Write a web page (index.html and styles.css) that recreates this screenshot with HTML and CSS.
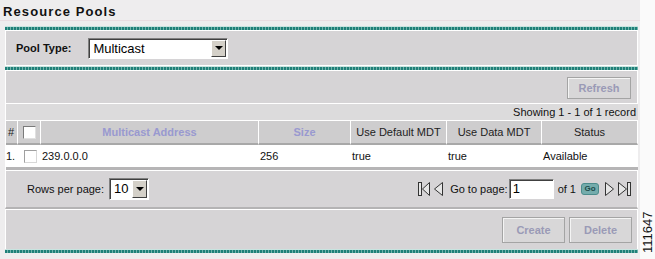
FILE: index.html
```html
<!DOCTYPE html>
<html lang="en">
<head>
  <meta charset="UTF-8">
  <title>Resource Pools</title>
  <link rel="stylesheet" href="styles.css">
</head>
<body>
  <div class="page">
    <div class="main">
      <h1 class="title">Resource Pools</h1>
      <div class="panel">
        <div class="stripe"></div>
        <div class="section filter">
          <span class="label">Pool Type:</span>
          <div class="select pool">
            <span class="value">Multicast</span>
            <span class="arrow"><i></i></span>
          </div>
        </div>
        <div class="stripe"></div>
        <div class="section toolbar">
          <button class="btn">Refresh</button>
        </div>
        <div class="showing">Showing 1 - 1 of 1 record</div>
        <table class="grid">
          <colgroup>
            <col style="width:12px">
            <col style="width:23px">
            <col style="width:218px">
            <col style="width:92px">
            <col style="width:96px">
            <col style="width:95px">
            <col>
          </colgroup>
          <thead>
            <tr>
              <th class="num">#</th>
              <th><span class="check"></span></th>
              <th class="sort">Multicast Address</th>
              <th class="sort">Size</th>
              <th>Use Default MDT</th>
              <th>Use Data MDT</th>
              <th>Status</th>
            </tr>
          </thead>
          <tbody>
            <tr>
              <td class="num">1.</td>
              <td><span class="check"></span></td>
              <td>239.0.0.0</td>
              <td>256</td>
              <td>true</td>
              <td>true</td>
              <td>Available</td>
            </tr>
          </tbody>
        </table>
        <div class="section pager">
          <div class="rows">
            <span>Rows per page:</span>
            <div class="select small">
              <span class="value">10</span>
              <span class="arrow"><i></i></span>
            </div>
          </div>
          <div class="nav">
            <svg width="12" height="14" viewBox="0 0 12 14"><rect x="0.5" y="0.5" width="3" height="13" fill="#e6e6e6" stroke="#333"/><polygon points="11.5,0.5 4.5,7 11.5,13.5" fill="#e6e6e6" stroke="#333"/></svg>
            <svg width="9" height="14" viewBox="0 0 9 14"><polygon points="8.5,0.5 0.5,7 8.5,13.5" fill="#e6e6e6" stroke="#333"/></svg>
            <span class="goto">Go to page:</span>
            <span class="input">1</span>
            <span>of 1</span>
            <span class="go">Go</span>
            <svg width="9" height="14" viewBox="0 0 9 14"><polygon points="0.5,0.5 8.5,7 0.5,13.5" fill="#e6e6e6" stroke="#333"/></svg>
            <svg width="14" height="14" viewBox="0 0 14 14"><polygon points="0.5,0.5 8.5,7 0.5,13.5" fill="#e6e6e6" stroke="#333"/><rect x="9.5" y="0.5" width="3" height="13" fill="#e6e6e6" stroke="#333"/></svg>
          </div>
        </div>
        <div class="section actions">
          <button class="btn">Create</button>
          <button class="btn">Delete</button>
        </div>
        <div class="stripe"></div>
      </div>
    </div>
    <div class="figno">111647</div>
  </div>
</body>
</html>
```

FILE: styles.css
```css
body {
  margin: 0;
  background: #fafafa;
  font-family: "Liberation Sans", Arial, sans-serif;
  font-size: 11px;
  color: #111;
}

.page {
  display: flex;
  width: 655px;
  height: 259px;
}

.main {
  width: 641px;
  background: #eeedee;
}

.title {
  margin: 0;
  height: 21px;
  padding: 5px 0 0 3px;
  box-sizing: border-box;
  font-size: 13px;
  font-weight: bold;
  letter-spacing: 1.1px;
  line-height: 13px;
  color: #111;
  border-bottom: 1px solid #e9dde1;
}

.panel {
  margin: 5px 0 0 5px;
  width: 633px;
}

.stripe {
  height: 4px;
  background:
    linear-gradient(#c8e4e0, #c8e4e0) top / 100% 1px no-repeat,
    repeating-linear-gradient(90deg, #1f8078 0 2px, #72b2ac 2px 3px);
}

.section {
  display: flex;
  align-items: center;
  background: #d6d4d6;
  border: 1px solid #fff;
  border-bottom: none;
}

.filter {
  height: 34px;
  padding-left: 10px;
  gap: 17px;
  border-bottom: 1px solid #fff;
}

.label {
  font-weight: bold;
  color: #111;
}

.select {
  display: flex;
  background: #fff;
  border: 1px solid;
  border-color: #808080 #fff #fff #808080;
  box-shadow: inset 1px 1px #404040;
  font-size: 13px;
  color: #000;
}

.select .value {
  flex: 1;
  padding: 2px 0 0 4px;
}

.select .arrow {
  width: 15px;
  margin: 1px 1px 1px 0;
  background: #d4d0c8;
  border: 1px solid;
  border-color: #fff #404040 #404040 #fff;
  box-sizing: border-box;
  display: flex;
  align-items: center;
  justify-content: center;
}

.select .arrow i {
  border-left: 4px solid transparent;
  border-right: 4px solid transparent;
  border-top: 4px solid #000;
  margin-left: 1px;
}

.pool {
  width: 140px;
  height: 21px;
  box-sizing: border-box;
}

.small {
  width: 40px;
  height: 22px;
  box-sizing: border-box;
}

.toolbar {
  height: 32px;
  justify-content: flex-end;
  padding-right: 6px;
}

.btn {
  font-family: "Liberation Sans", Arial, sans-serif;
  font-size: 11px;
  font-weight: bold;
  color: #9a9ab6;
  background: #d8d7d8;
  border: 1px solid #a4a4a4;
  box-shadow: inset 1px 1px #f4f4f4;
  padding: 0;
  cursor: default;
}

.toolbar .btn {
  width: 64px;
  height: 22px;
  margin-top: 2px;
}

.showing {
  background: #dcdbdc;
  border-top: 1px solid #fff;
  border-left: 1px solid #fff;
  height: 16px;
  line-height: 16px;
  text-align: right;
  padding-right: 2px;
  color: #111;
}

.grid {
  width: 633px;
  table-layout: fixed;
  border-collapse: separate;
  border-spacing: 0;
  border-left: 1px solid #fff;
}

.grid th {
  height: 22px;
  background: #cecdce;
  border-top: 1px solid #fff;
  border-right: 1px solid #fff;
  border-bottom: 2px solid #a8a8a8;
  font-weight: normal;
  color: #222;
  padding: 0;
  text-align: center;
}

.grid th.num {
  text-align: left;
  padding-left: 2px;
}

.grid th.sort {
  font-weight: bold;
  color: #9999d0;
}

.grid td {
  height: 22px;
  background: #fff;
  border-bottom: 3px solid #b6b5b6;
  padding: 0 0 0 1px;
  color: #111;
  white-space: nowrap;
}

.grid td.num {
  padding-left: 0;
}

.check {
  display: block;
  width: 11px;
  height: 11px;
  margin-left: 5px;
  background: #fff;
  border: 1px solid;
  border-color: #7a7a7a #e0e0e0 #e0e0e0 #7a7a7a;
}

.grid td .check {
  border-color: #a0a0a0 #d8d8d8 #d8d8d8 #a0a0a0;
}

.pager {
  height: 36px;
  justify-content: space-between;
  padding: 0 5px 0 21px;
  border-bottom: 2px solid #b4b3b4;
}

.rows {
  display: flex;
  align-items: center;
  gap: 5px;
  color: #111;
}

.nav {
  display: flex;
  align-items: center;
  gap: 4px;
  color: #111;
}

.goto {
  margin-left: 3px;
}

.input {
  width: 45px;
  height: 20px;
  box-sizing: border-box;
  background: #fff;
  border: 1px solid;
  border-color: #808080 #fff #fff #808080;
  box-shadow: inset 1px 1px #404040;
  font-size: 13px;
  padding: 1px 0 0 3px;
  margin-left: -3px;
  color: #000;
}

.go {
  width: 16px;
  height: 10px;
  line-height: 10px;
  border: 1px solid #4c8c8c;
  border-radius: 3px;
  background: #74acac;
  font-size: 8px;
  font-weight: bold;
  color: #1c4a4a;
  text-align: center;
  margin: 0 2px 0 1px;
}

.actions {
  height: 39px;
  justify-content: flex-end;
  gap: 4px;
  padding-right: 5px;
}

.actions .btn {
  width: 63px;
  height: 26px;
}

.figno {
  flex: 1;
  display: flex;
  writing-mode: vertical-rl;
  transform: rotate(180deg);
  align-items: center;
  padding-top: 6px;
  font-size: 13px;
  color: #111;
}
```
